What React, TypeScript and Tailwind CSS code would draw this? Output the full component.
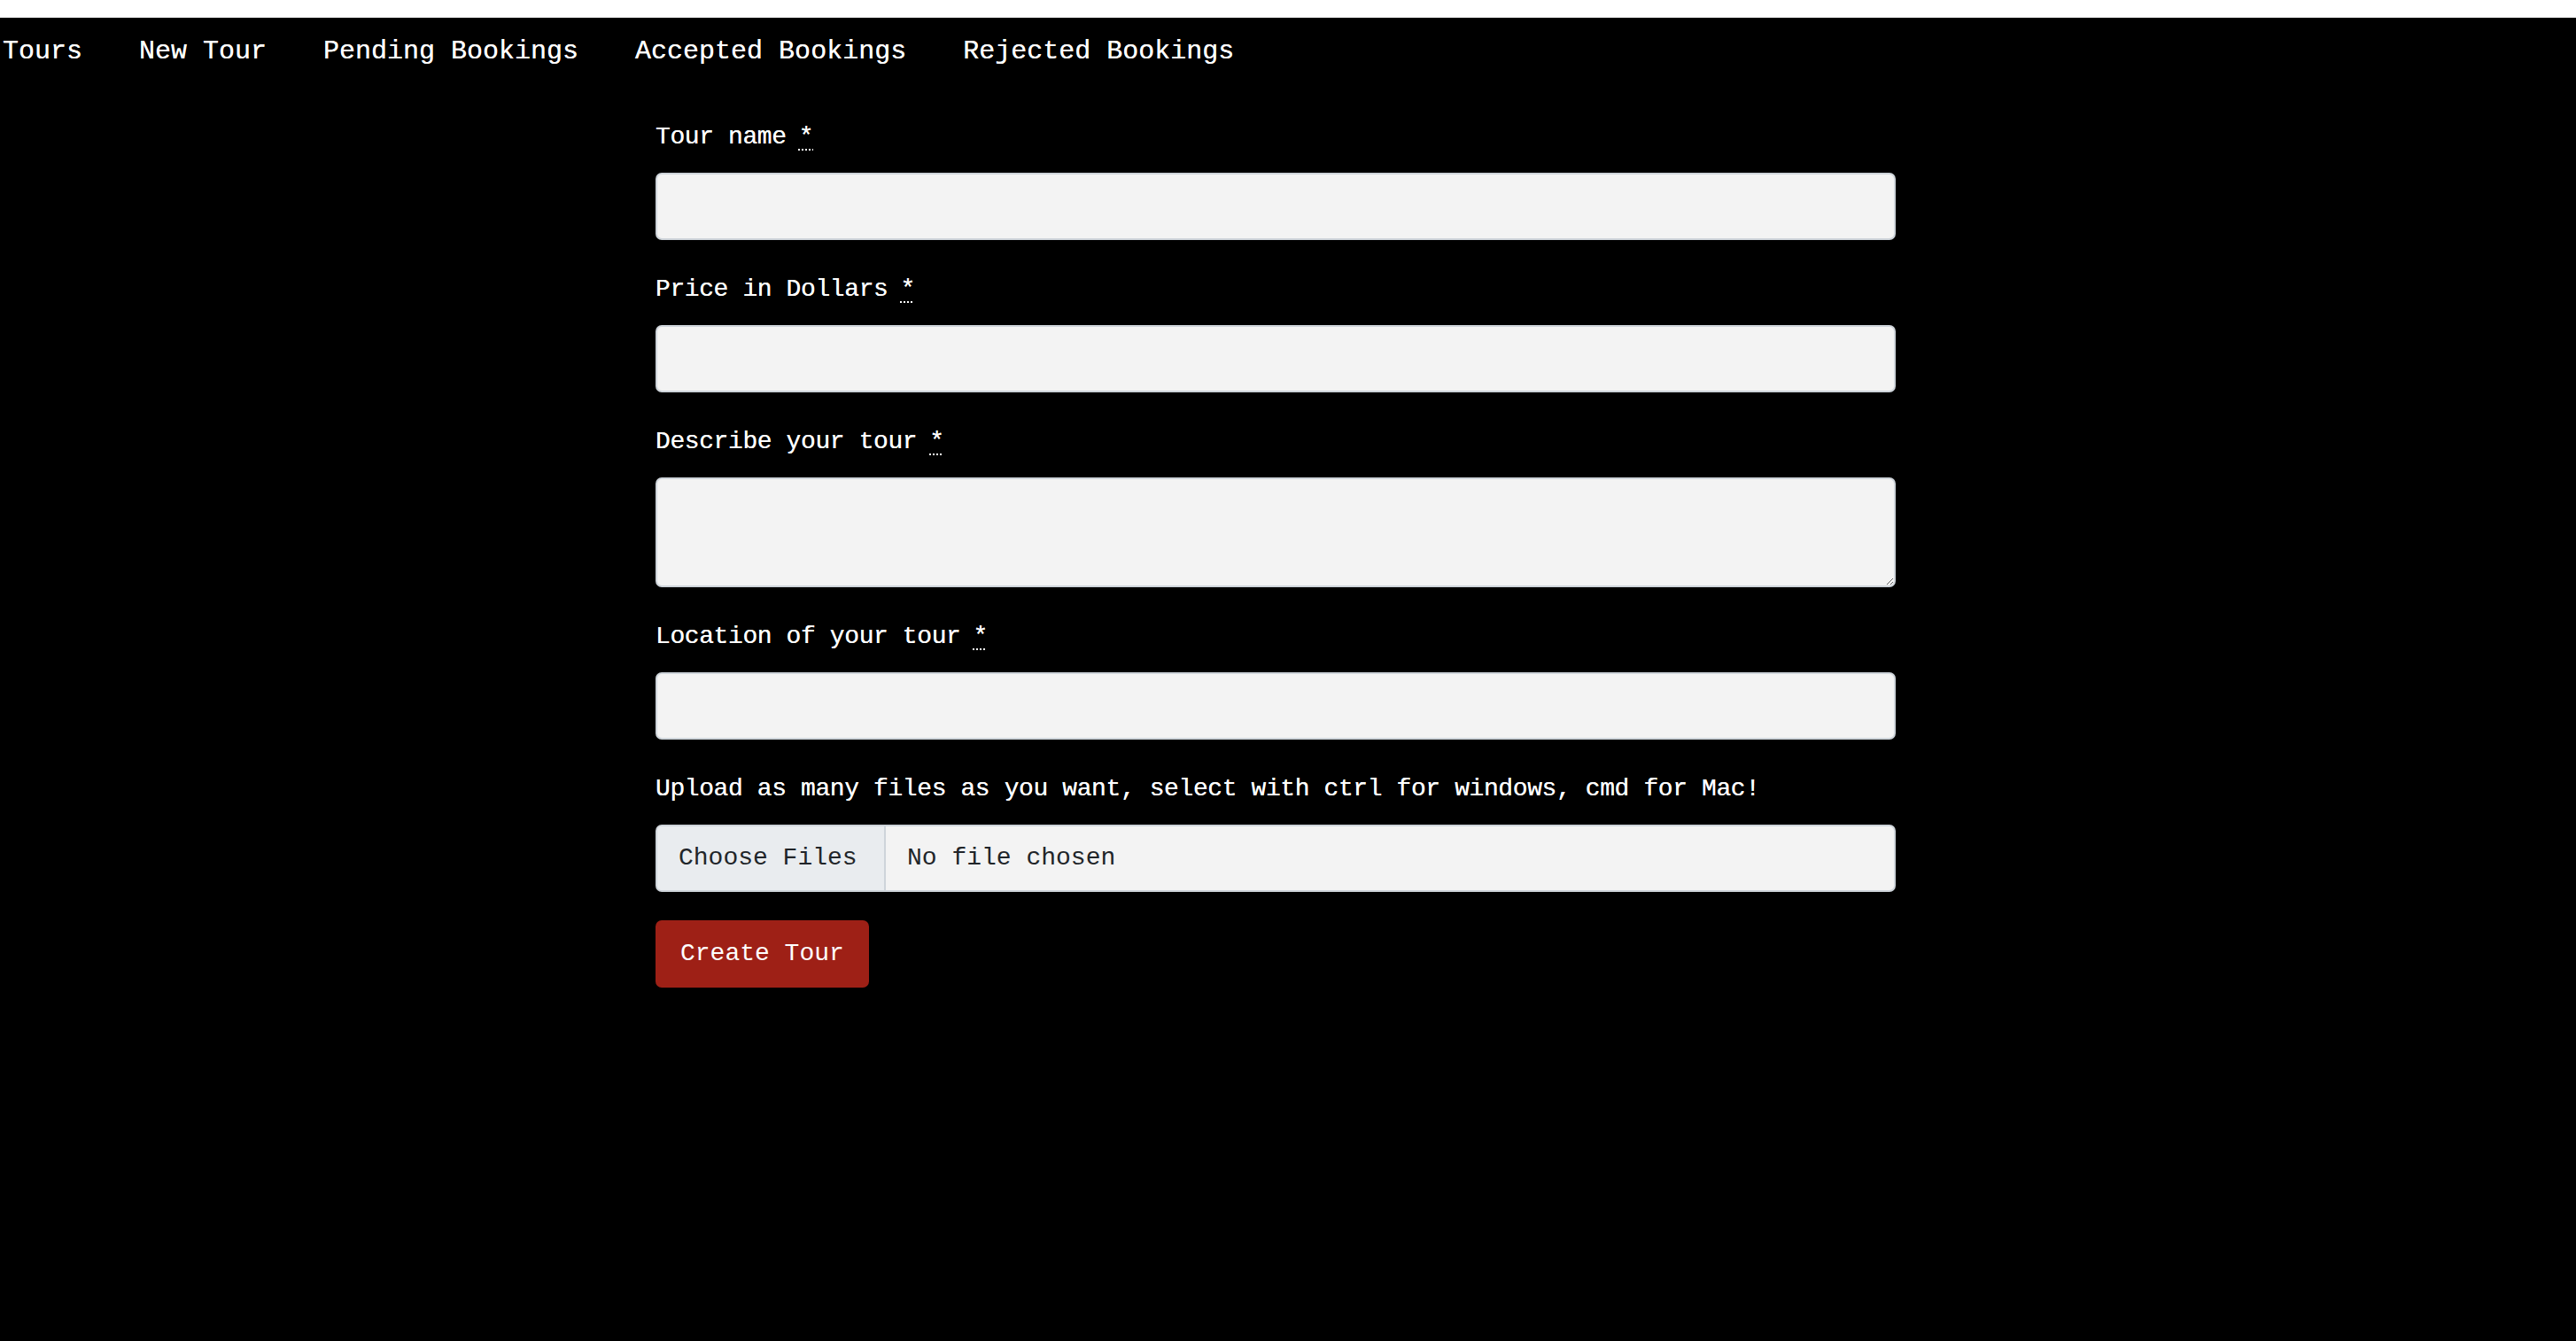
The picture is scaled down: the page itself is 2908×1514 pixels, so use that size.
const navLinks = ["Tours", "New Tour", "Pending Bookings", "Accepted Bookings", "Rejected Bookings"];

const typewriter = "font-['Liberation_Mono','DejaVu_Sans_Mono',monospace]";

function Required() {
	return (
		<abbr title="required" className="ml-[14px] cursor-help underline decoration-dotted decoration-2 underline-offset-[6px]">
			*
		</abbr>
	);
}

function FieldLabel({ children, required }: { children: string; required?: boolean }) {
	return (
		<label className="mb-[16px] block text-[28px] leading-[48px] tracking-[-0.4px] text-white [text-shadow:0_0_0.6px_#fff]">
			{children}
			{required && <Required />}
		</label>
	);
}

const inputClass =
	"block h-[76px] w-full rounded-[7px] border-2 border-[#ced4da] bg-[#f3f3f3] px-[24px] text-[28px] text-[#212529] outline-none";

export default function App() {
	return (
		<div className={`min-h-screen bg-black ${typewriter}`}>
			<div className="h-[20px] bg-white" />
			<nav className="flex gap-[64px] pl-[3px] pt-[14px] pb-[49px] text-[30px] leading-[48px] text-white [text-shadow:0_0_0.6px_#fff]">
				{navLinks.map((link) => (
					<a key={link} href="#" className="whitespace-nowrap">
						{link}
					</a>
				))}
			</nav>
			<form className="ml-[740px] w-[1400px]" onSubmit={(e) => e.preventDefault()}>
				<div className="mb-[32px]">
					<FieldLabel required>Tour name</FieldLabel>
					<input type="text" className={inputClass} />
				</div>
				<div className="mb-[32px]">
					<FieldLabel required>Price in Dollars</FieldLabel>
					<input type="text" className={inputClass} />
				</div>
				<div className="mb-[32px]">
					<FieldLabel required>Describe your tour</FieldLabel>
					<textarea className="block h-[124px] w-full resize-y rounded-[7px] border-2 border-[#ced4da] bg-[#f3f3f3] px-[24px] py-[12px] text-[28px] text-[#212529] outline-none" />
				</div>
				<div className="mb-[32px]">
					<FieldLabel required>Location of your tour</FieldLabel>
					<input type="text" className={inputClass} />
				</div>
				<div className="mb-[32px]">
					<FieldLabel>Upload as many files as you want, select with ctrl for windows, cmd for Mac!</FieldLabel>
					<div className="flex h-[76px] w-full overflow-hidden rounded-[7px] border-2 border-[#ced4da] bg-[#f3f3f3] text-[28px] text-[#212529]">
						<span className="flex w-[258px] items-center border-r-2 border-[#ced4da] bg-[#e9ecef] px-[24px]">
							Choose Files
						</span>
						<span className="flex items-center px-[24px]">No file chosen</span>
					</div>
				</div>
				<button
					type="submit"
					className="h-[76px] rounded-[7px] bg-[#9e2016] px-[28px] text-[28px] text-white"
				>
					Create Tour
				</button>
			</form>
		</div>
	);
}
